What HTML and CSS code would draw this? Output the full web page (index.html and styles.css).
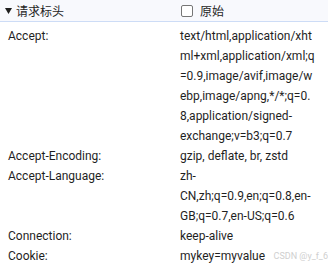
FILE: index.html
```html
<!DOCTYPE html>
<html lang="zh-CN">
<head>
    <meta charset="UTF-8" />
    <title>请求标头</title>
    <link rel="stylesheet" href="styles.css">
</head>
<body>

    <div class="header">
        <div class="header-title">
            <svg class="arrow" width="7" height="6" viewBox="0 0 7 6"><path d="M0 0 H7 L3.5 6 Z" fill="#1f1f1f"/></svg>
            请求标头
        </div>
        <label class="raw">
            <span class="box"></span>
            原始
        </label>
    </div>

    <div class="headers">
        <div class="row"><div class="name">Accept:</div><div class="value">text/html,application/xhtml+xml,application/xml;q=0.9,image/avif,image/webp,image/apng,*/*;q=0.8,application/signed-exchange;v=b3;q=0.7</div></div>
        <div class="row"><div class="name">Accept-Encoding:</div><div class="value">gzip, deflate, br, zstd</div></div>
        <div class="row"><div class="name">Accept-Language:</div><div class="value">zh-CN,zh;q=0.9,en;q=0.8,en-GB;q=0.7,en-US;q=0.6</div></div>
        <div class="row"><div class="name">Connection:</div><div class="value">keep-alive</div></div>
        <div class="row"><div class="name">Cookie:</div><div class="value">mykey=myvalue</div></div>
    </div>

    <div class="watermark">CSDN @y_f_6</div>

</body>
</html>
```

FILE: styles.css
```css
body {
    margin: 0;
    font-family: Roboto, "Noto Sans CJK SC", sans-serif;
    font-size: 12px;
    color: #1f1f1f;
    background: #fff;
    position: relative;
    height: 266px;
    overflow: hidden;
}

.header {
    display: grid;
    grid-template-columns: 181px 1fr;
    align-items: center;
    height: 21px;
    background: #f8f9fd;
    border-bottom: 1px solid #cddcf6;
}

.header-title {
    display: flex;
    align-items: center;
    padding-left: 5px;
    gap: 4px;
}

.arrow {
    margin-top: 1px;
}

.raw {
    display: flex;
    align-items: center;
    gap: 7px;
}

.box {
    width: 10px;
    height: 10px;
    border: 1px solid #767676;
    border-radius: 2px;
    background: #fff;
}

.headers {
    padding-top: 4px;
}

.row {
    display: grid;
    grid-template-columns: 172px 136px;
    padding-left: 8px;
    line-height: 20px;
}

.value {
    overflow-wrap: break-word;
}

.watermark {
    position: absolute;
    right: 0;
    bottom: 5px;
    font-size: 9px;
    color: #cfcfcf;
    white-space: nowrap;
}
```
